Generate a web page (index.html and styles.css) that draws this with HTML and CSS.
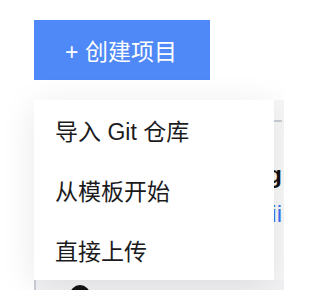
FILE: index.html
```html
<!DOCTYPE html>
<html lang="zh">
<head>
<meta charset="utf-8">
<link rel="stylesheet" href="styles.css">
</head>
<body>
<div class="wrap">
  <button class="create-btn">+ 创建项目</button>
  <div class="page-bg">
    <div class="bg-head"></div>
    <div class="bg-title">Start building</div>
    <div class="bg-link">Open in Hawaii</div>
    <div class="bg-row">
      <span class="bg-avatar"></span>
    </div>
  </div>
  <ul class="menu">
    <li class="menu-item">导入 Git 仓库</li>
    <li class="menu-item">从模板开始</li>
    <li class="menu-item">直接上传</li>
  </ul>
</div>
</body>
</html>
```
FILE: styles.css
```css
html, body {
  margin: 0;
  padding: 0;
  background: #ffffff;
  overflow: hidden;
}
body {
  font-family: "Liberation Sans", "Noto Sans CJK SC", sans-serif;
}
.wrap {
  position: relative;
  width: 284px;
  height: 290px;
  overflow: hidden;
  padding-top: 20px;
  box-sizing: border-box;
}
.create-btn {
  display: flex;
  align-items: center;
  justify-content: center;
  margin-left: 34px;
  width: 176px;
  height: 60px;
  border: none;
  border-radius: 0;
  background: #4e89f7;
  color: #ffffff;
  font-family: "Liberation Sans", "Noto Sans CJK SC", sans-serif;
  font-size: 23px;
  padding: 0 2px 0 0;
}
.page-bg {
  margin-top: 20px;
  margin-left: 34px;
  padding-right: 2px;
  text-align: right;
  background: #f7f7f8;
  white-space: nowrap;
  overflow: hidden;
}
.bg-head {
  height: 20px;
  border-bottom: 2px solid #c9cdd6;
}
.bg-title {
  margin-top: 38px;
  font-size: 24px;
  line-height: 30px;
  font-weight: 700;
  color: #111111;
}
.bg-link {
  margin-top: 9px;
  font-size: 24px;
  line-height: 30px;
  color: #3a74f1;
}
.bg-row {
  margin-top: 51px;
  margin-right: -2px;
  display: flex;
  align-items: flex-start;
  border-left: 2px solid #c9cdd6;
  padding: 5px 0 0 34px;
  height: 20px;
  background: #f2f2f4;
}
.bg-avatar {
  display: block;
  width: 20px;
  height: 20px;
  border-radius: 50%;
  background: #111111;
  flex: none;
}
.menu {
  position: absolute;
  top: 100px;
  left: 34px;
  width: 240px;
  margin: 0;
  padding: 0;
  list-style: none;
  background: #ffffff;
  box-shadow: 0 6px 34px rgba(0, 0, 0, 0.09);
}
.menu-item {
  height: 60px;
  display: flex;
  align-items: center;
  padding-left: 21px;
  font-size: 23px;
  color: #1b1b1d;
  white-space: nowrap;
}
```
